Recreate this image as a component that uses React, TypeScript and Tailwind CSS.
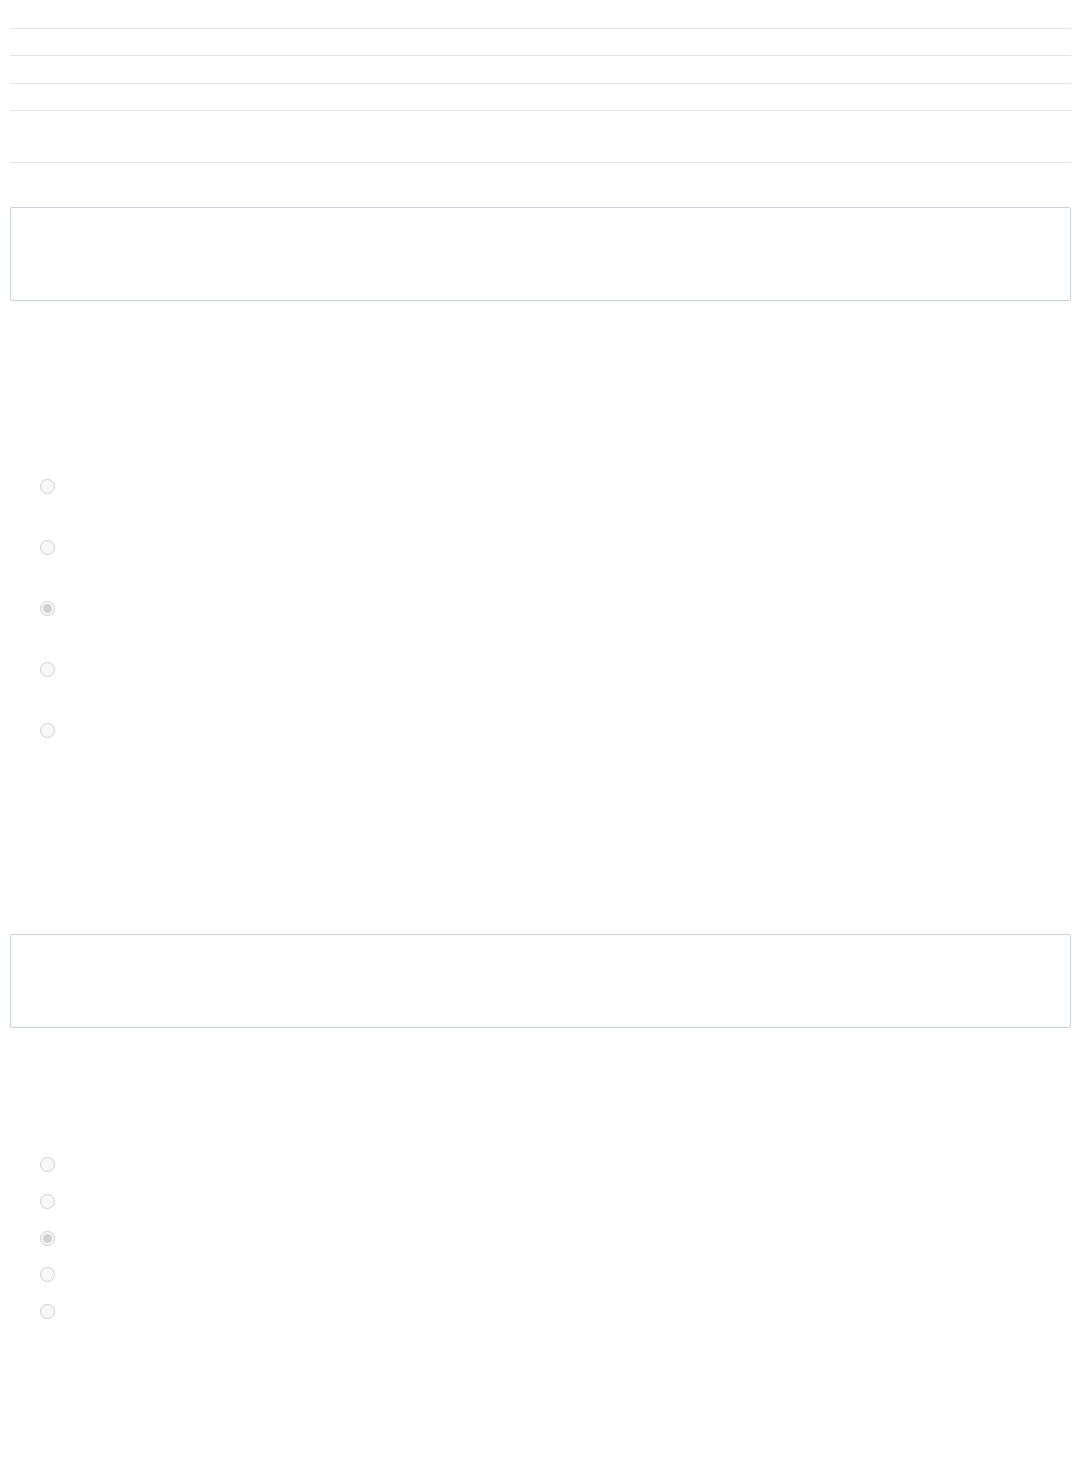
export default function App() {
  const group1 = [false, false, true, false, false]
  const group2 = [false, false, true, false, false]
  return (
    <div className="w-[1079px] h-[1480px] bg-white pl-[10px] pt-[28px] font-['Liberation_Sans',sans-serif]">
      <div className="w-[1061px]">
        <div className="border-t border-[#e3e3e7] h-[27px]" />
        <div className="border-t border-[#e3e3e7] h-[28px]" />
        <div className="border-t border-[#e3e3e7] h-[27px]" />
        <div className="border-t border-[#e3e3e7] h-[52px]" />
        <div className="border-t border-[#e3e3e7] h-[45px]" />
      </div>
      <div className="w-[1061px] h-[94px] border border-[#cbcfd7] rounded-[2px] bg-white" />
      <div className="h-[178px]" />
      <div className="flex flex-col">
        {group1.map((c, i) => (
          <div key={i} className="h-[61px] flex items-start">
            <input type="radio" name="g1" disabled defaultChecked={c} className="w-[15px] h-[15px] m-0 ml-[30px]" />
          </div>
        ))}
      </div>
      <div className="h-[150px]" />
      <div className="w-[1061px] h-[94px] border border-[#cbcfd7] rounded-[2px] bg-white" />
      <div className="h-[129px]" />
      <div className="flex flex-col">
        {group2.map((c, i) => (
          <div key={i} className="h-[36.75px] flex items-start">
            <input type="radio" name="g2" disabled defaultChecked={c} className="w-[15px] h-[15px] m-0 ml-[30px]" />
          </div>
        ))}
      </div>
    </div>
  )
}
